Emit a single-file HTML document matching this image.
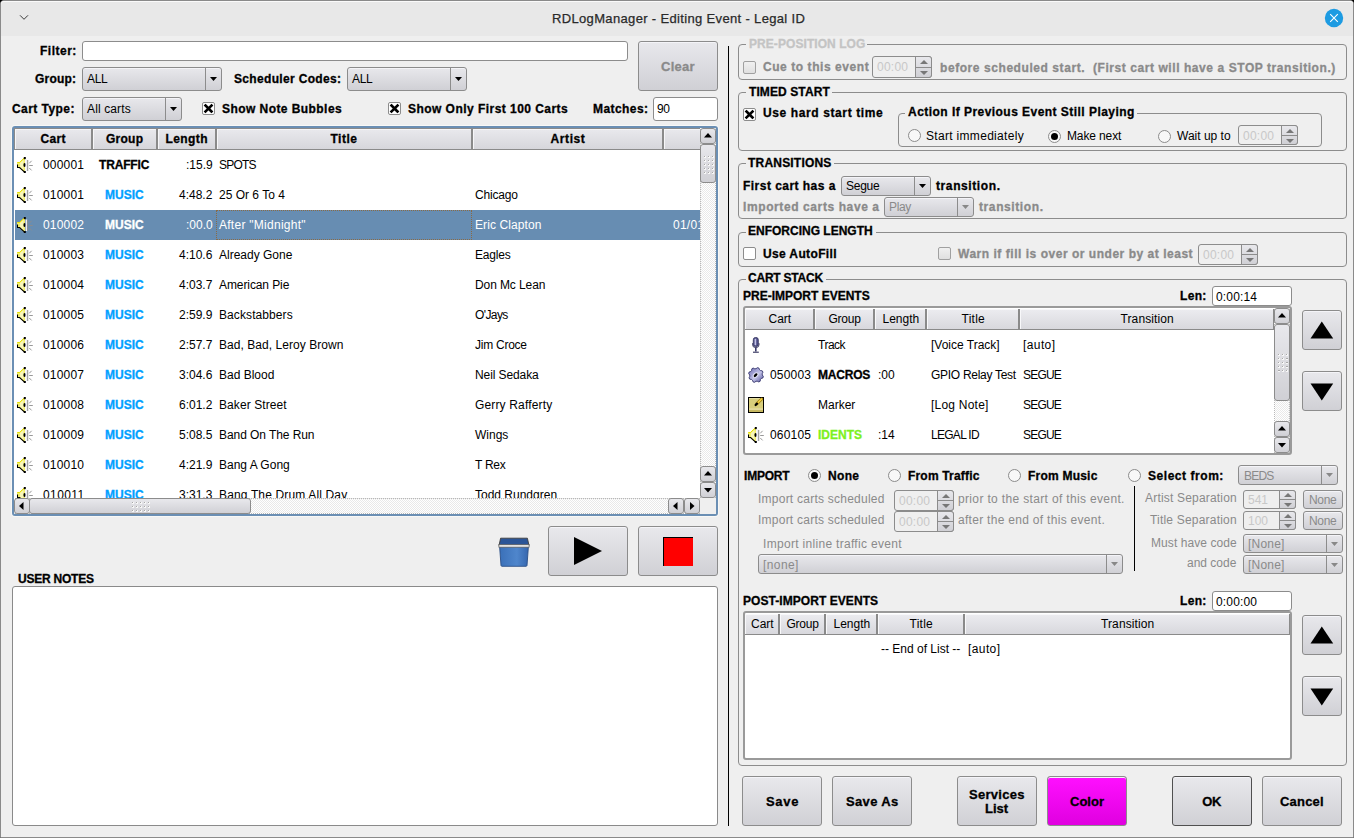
<!DOCTYPE html>
<html><head><meta charset="utf-8"><style>
html,body{margin:0;padding:0;width:1354px;height:838px;overflow:hidden;background:#000}
body div{position:absolute;box-sizing:border-box}
.t{position:absolute;font-family:"Liberation Sans",sans-serif;line-height:20px;white-space:pre}
svg{overflow:visible}
</style></head><body>
<svg width="0" height="0" style="position:absolute"><defs>
<linearGradient id="gg" x1="0" y1="0" x2="1" y2="1"><stop offset="0" stop-color="#6c6cb4"/><stop offset="0.55" stop-color="#c4c4e8"/><stop offset="1" stop-color="#50509a"/></linearGradient>
<linearGradient id="tg" x1="0" y1="0" x2="1" y2="0"><stop offset="0" stop-color="#3a70b8"/><stop offset="0.6" stop-color="#4f86cc"/><stop offset="1" stop-color="#3566ae"/></linearGradient>
<symbol id="spk" viewBox="0 0 16 16">
 <path d="M0 5 H2.5 L8 0 V16 L2.5 11 H0 Z" fill="#f2ee6a"/>
 <path d="M3 6 L6.5 2.8 V13.2 L3 10 Z" fill="#f8f6b8"/>
 <path d="M0.5 7.5 V10.5 H2.6 L7.6 15.2" fill="none" stroke="#000" stroke-width="1.1"/>
 <path d="M0.4 5.5 H2.5 L7.2 1" fill="none" stroke="#e6de00" stroke-width="1"/>
 <rect x="6.8" y="0" width="2" height="2.2" fill="#000"/>
 <rect x="6.8" y="14" width="2" height="2" fill="#000"/>
 <ellipse cx="7.6" cy="8" rx="1.2" ry="1.9" fill="#000"/>
 <rect x="8.6" y="2.5" width="1.6" height="11.5" fill="#ededf3"/>
 <rect x="10.2" y="3" width="1" height="11" fill="#8c8c8c"/>
 <path d="M12.3 6.3 L14.6 3.8 M12.2 8.5 H15.8 M12.3 11 L14.6 13.4" stroke="#8c8c8c" stroke-width="0.9"/>
</symbol>
<symbol id="mic" viewBox="0 0 16 16">
 <rect x="5.3" y="0.4" width="5" height="9.2" rx="2.4" fill="#50508a" stroke="#2c2c58" stroke-width="0.8"/>
 <rect x="6.6" y="1.8" width="1.6" height="6.4" fill="#c4c4e6"/>
 <path d="M4.6 6.2 V7.8 Q4.6 10.6 7.8 10.6 Q11 10.6 11 7.8 V6.2" fill="none" stroke="#2c2c58" stroke-width="0.9"/>
 <path d="M7.8 10.6 V14.6" stroke="#3a3a6a" stroke-width="1.6"/>
 <path d="M5 15.2 H10.8" stroke="#2c2c58" stroke-width="1.1"/>
</symbol>
<symbol id="gear" viewBox="0 0 16 16">
 <path d="M15.35 9.49 L14.92 10.90 L13.23 11.52 L12.44 12.47 L12.14 14.25 L10.84 14.94 L9.21 14.18 L7.98 14.30 L6.51 15.35 L5.10 14.92 L4.48 13.23 L3.53 12.44 L1.75 12.14 L1.06 10.84 L1.82 9.21 L1.70 7.98 L0.65 6.51 L1.08 5.10 L2.77 4.48 L3.56 3.53 L3.86 1.75 L5.16 1.06 L6.79 1.82 L8.02 1.70 L9.49 0.65 L10.90 1.08 L11.52 2.77 L12.47 3.56 L14.25 3.86 L14.94 5.16 L14.18 6.79 L14.30 8.02 Z" fill="url(#gg)" stroke="#34346c" stroke-width="0.9" stroke-linejoin="round"/>
 <ellipse cx="7.6" cy="8.2" rx="3.3" ry="2.3" transform="rotate(-45 7.6 8.2)" fill="#e4e4f6"/>
 <ellipse cx="7.6" cy="8.2" rx="2.3" ry="1.3" transform="rotate(-45 7.6 8.2)" fill="#000"/>
</symbol>
<symbol id="note" viewBox="0 0 16 16">
 <rect x="0.5" y="0.5" width="15" height="15" fill="#d8ce7c" stroke="#000" stroke-width="1"/>
 <rect x="1" y="1" width="14" height="1" fill="#e6dea0"/>
 <rect x="1" y="11.6" width="14" height="1.2" fill="#eee6b8"/>
 <rect x="1" y="12.8" width="14" height="2.2" fill="#c6b862"/>
 <path d="M9 6.6 L13.6 2" stroke="#9a7a10" stroke-width="3" stroke-linecap="round"/>
 <path d="M9 6.6 L13.6 2" stroke="#f4d040" stroke-width="1.7" stroke-linecap="round"/>
 <path d="M7.6 8 L9 6.6" stroke="#000" stroke-width="2.2" stroke-linecap="round"/>
</symbol>
<symbol id="trash" viewBox="0 0 32 30">
 <path d="M1.6 9.5 H30.4 L29 28.5 Q28.8 29.3 28 29.3 H4 Q3.2 29.3 3 28.5 Z" fill="url(#tg)" stroke="#2a4e86" stroke-width="0.9"/>
 <path d="M2.6 1.2 H29.4 L31 8.6 H1 Z" fill="#2b5597" stroke="#3c3c3c" stroke-width="0.9"/>
 <rect x="0.9" y="7.6" width="30.2" height="2.6" fill="#e2e2e2" stroke="#5a5a5a" stroke-width="0.7"/>
</symbol>
</defs></svg>
<div style="left:0px;top:0px;width:1354px;height:838px;background:#000;"></div><div style="left:0px;top:0px;width:1354px;height:838px;background:#efefef;border:1px solid #8a8a8a;border-radius:4px 4px 0 0;"></div><div style="left:1px;top:1px;width:1352px;height:35px;background:#e8e8e8;border-radius:3px 3px 0 0;box-shadow:inset 0 1px 0 #fafafa;"></div><svg style="position:absolute;left:18px;top:13px" width="14" height="10"><path d="M2 2.3 L6 6.3 L10 2.3" fill="none" stroke="#3a3a3a" stroke-width="1"/></svg><span class="t" style="left:552.00px;top:9px;font-size:13px;color:#2a2a2a;letter-spacing:0.342px;-webkit-text-stroke:0.25px;">RDLogManager - Editing Event - Legal ID</span><svg style="position:absolute;left:1324px;top:8px" width="20" height="20"><circle cx="10" cy="10" r="9.2" fill="#1d9be2"/><path d="M6.2 6.2 L13.8 13.8 M13.8 6.2 L6.2 13.8" stroke="#fff" stroke-width="1.1"/></svg><span class="t" style="left:40.00px;top:41px;font-size:12px;color:#000;font-weight:bold;-webkit-text-stroke:0.3px;letter-spacing:0.500px;">Filter:</span><div style="left:82px;top:41px;width:546px;height:20px;background:#fff;border:1px solid #8c8c8c;border-radius:3px;"></div><span class="t" style="left:35.00px;top:69px;font-size:12px;color:#000;font-weight:bold;-webkit-text-stroke:0.3px;letter-spacing:0.200px;">Group:</span><div style="left:82px;top:67px;width:140px;height:24px;background:linear-gradient(#e8e8ec,#d0d0d5);border:1px solid #8c8c8c;border-radius:3px;box-shadow:inset 0 1px 0 #f4f4f8;"></div><div style="left:205px;top:67px;width:1px;height:24px;background:#8c8c8c;"></div><svg style="position:absolute;left:210.00px;top:77.00px" width="7.00" height="4.00"><path d="M0.00 0.00 L7.00 0.00 L3.50 4.00 Z" fill="#000"/></svg><span class="t" style="left:87.00px;top:69px;font-size:12px;color:#000;letter-spacing:-0.300px;">ALL</span><span class="t" style="left:234.00px;top:69px;font-size:12px;color:#000;font-weight:bold;-webkit-text-stroke:0.3px;letter-spacing:0.333px;">Scheduler Codes:</span><div style="left:347px;top:67px;width:120px;height:24px;background:linear-gradient(#e8e8ec,#d0d0d5);border:1px solid #8c8c8c;border-radius:3px;box-shadow:inset 0 1px 0 #f4f4f8;"></div><div style="left:450px;top:67px;width:1px;height:24px;background:#8c8c8c;"></div><svg style="position:absolute;left:455.00px;top:77.00px" width="7.00" height="4.00"><path d="M0.00 0.00 L7.00 0.00 L3.50 4.00 Z" fill="#000"/></svg><span class="t" style="left:352.00px;top:69px;font-size:12px;color:#000;letter-spacing:-0.300px;">ALL</span><div style="left:638px;top:41px;width:80px;height:50px;background:linear-gradient(#e8e8ec,#d0d0d5);border:1px solid #8c8c8c;border-radius:3px;box-shadow:inset 0 1px 0 #f4f4f8;"></div><span class="t" style="left:661.00px;top:57px;font-size:13px;color:#8a8a8a;font-weight:bold;-webkit-text-stroke:0.3px;letter-spacing:0.250px;">Clear</span><span class="t" style="left:12.00px;top:99px;font-size:12px;color:#000;font-weight:bold;-webkit-text-stroke:0.3px;letter-spacing:0.444px;">Cart Type:</span><div style="left:82px;top:97px;width:100px;height:24px;background:linear-gradient(#e8e8ec,#d0d0d5);border:1px solid #8c8c8c;border-radius:3px;box-shadow:inset 0 1px 0 #f4f4f8;"></div><div style="left:165px;top:97px;width:1px;height:24px;background:#8c8c8c;"></div><svg style="position:absolute;left:170.00px;top:107.00px" width="7.00" height="4.00"><path d="M0.00 0.00 L7.00 0.00 L3.50 4.00 Z" fill="#000"/></svg><span class="t" style="left:87.00px;top:99px;font-size:12px;color:#000;letter-spacing:0.125px;">All carts</span><div style="left:202px;top:102px;width:13px;height:13px;background:#fff;border:1px solid #8c8c8c;border-radius:2px;"></div><svg style="position:absolute;left:202px;top:102px" width="13" height="13"><path d="M3.5 3.5 L9.5 9.5 M9.5 3.5 L3.5 9.5" stroke="#000" stroke-width="2.6" stroke-linecap="square"/></svg><span class="t" style="left:222.00px;top:99px;font-size:12px;color:#000;font-weight:bold;-webkit-text-stroke:0.3px;letter-spacing:0.438px;">Show Note Bubbles</span><div style="left:388px;top:102px;width:13px;height:13px;background:#fff;border:1px solid #8c8c8c;border-radius:2px;"></div><svg style="position:absolute;left:388px;top:102px" width="13" height="13"><path d="M3.5 3.5 L9.5 9.5 M9.5 3.5 L3.5 9.5" stroke="#000" stroke-width="2.6" stroke-linecap="square"/></svg><span class="t" style="left:408.00px;top:99px;font-size:12px;color:#000;font-weight:bold;-webkit-text-stroke:0.3px;letter-spacing:0.458px;">Show Only First 100 Carts</span><span class="t" style="left:593.00px;top:99px;font-size:12px;color:#000;font-weight:bold;-webkit-text-stroke:0.3px;letter-spacing:0.429px;">Matches:</span><div style="left:653px;top:97px;width:65px;height:24px;background:#fff;border:1px solid #8c8c8c;border-radius:3px;"></div><span class="t" style="left:657.00px;top:99px;font-size:12px;color:#000;letter-spacing:-0.300px;">90</span><div style="left:12px;top:126px;width:706px;height:390px;background:#fff;border:2px solid #6b8fb4;border-radius:3px;box-shadow:0 0 0 1px #f8f8f6;"></div><div style="left:14px;top:128px;width:686px;height:1px;background:#8a8a8a;"></div><div style="left:14px;top:128px;width:1px;height:22px;background:#8a8a8a;"></div><div style="left:15px;top:129px;width:78px;height:21px;background:linear-gradient(#e9e9ed,#d6d6db);border-right:2px solid #8a8a8a;border-bottom:1px solid #8a8a8a;box-shadow:inset 1px 1px 0 #f6f6f8;"></div><span class="t" style="left:40.50px;top:129px;font-size:12px;color:#000;font-weight:bold;-webkit-text-stroke:0.3px;letter-spacing:0.333px;">Cart</span><div style="left:93px;top:129px;width:65px;height:21px;background:linear-gradient(#e9e9ed,#d6d6db);border-right:2px solid #8a8a8a;border-bottom:1px solid #8a8a8a;box-shadow:inset 1px 1px 0 #f6f6f8;"></div><span class="t" style="left:106.00px;top:129px;font-size:12px;color:#000;font-weight:bold;-webkit-text-stroke:0.3px;letter-spacing:0.250px;">Group</span><div style="left:158px;top:129px;width:59px;height:21px;background:linear-gradient(#e9e9ed,#d6d6db);border-right:2px solid #8a8a8a;border-bottom:1px solid #8a8a8a;box-shadow:inset 1px 1px 0 #f6f6f8;"></div><span class="t" style="left:165.50px;top:129px;font-size:12px;color:#000;font-weight:bold;-webkit-text-stroke:0.3px;letter-spacing:0.400px;">Length</span><div style="left:217px;top:129px;width:256px;height:21px;background:linear-gradient(#e9e9ed,#d6d6db);border-right:2px solid #8a8a8a;border-bottom:1px solid #8a8a8a;box-shadow:inset 1px 1px 0 #f6f6f8;"></div><span class="t" style="left:330.50px;top:129px;font-size:12px;color:#000;font-weight:bold;-webkit-text-stroke:0.3px;letter-spacing:0.500px;">Title</span><div style="left:473px;top:129px;width:191px;height:21px;background:linear-gradient(#e9e9ed,#d6d6db);border-right:2px solid #8a8a8a;border-bottom:1px solid #8a8a8a;box-shadow:inset 1px 1px 0 #f6f6f8;"></div><span class="t" style="left:550.50px;top:129px;font-size:12px;color:#000;font-weight:bold;-webkit-text-stroke:0.3px;letter-spacing:0.600px;">Artist</span><div style="left:664px;top:129px;width:36px;height:21px;background:linear-gradient(#e9e9ed,#d6d6db);border-right:0 solid #8a8a8a;border-bottom:1px solid #8a8a8a;box-shadow:inset 1px 1px 0 #f6f6f8;"></div><div style="left:15px;top:150px;width:685px;height:348px;overflow:hidden"><svg style="position:absolute;left:2px;top:7px" width="16" height="16"><use href="#spk"/></svg><span class="t" style="left:28.00px;top:5px;font-size:12px;color:#000;letter-spacing:0.200px;">000001</span><span class="t" style="left:84.00px;top:5px;font-size:12px;color:#000;font-weight:bold;-webkit-text-stroke:0.3px;letter-spacing:-0.167px;">TRAFFIC</span><span class="t" style="left:171.00px;top:5px;font-size:12px;color:#000;">:15.9</span><span class="t" style="left:204.00px;top:5px;font-size:12px;color:#000;letter-spacing:-0.800px;">SPOTS</span><svg style="position:absolute;left:2px;top:37px" width="16" height="16"><use href="#spk"/></svg><span class="t" style="left:28.00px;top:35px;font-size:12px;color:#000;letter-spacing:0.200px;">010001</span><span class="t" style="left:90.00px;top:35px;font-size:12px;color:#00a0ff;font-weight:bold;-webkit-text-stroke:0.3px;">MUSIC</span><span class="t" style="left:164.00px;top:35px;font-size:12px;color:#000;">4:48.2</span><span class="t" style="left:204.00px;top:35px;font-size:12px;color:#000;">25 Or 6 To 4</span><span class="t" style="left:460.00px;top:35px;font-size:12px;color:#000;letter-spacing:-0.167px;">Chicago</span><div style="left:0;top:60px;width:685px;height:30px;background:#678db2"></div><svg style="position:absolute;left:2px;top:67px" width="16" height="16"><use href="#spk"/></svg><span class="t" style="left:28.00px;top:65px;font-size:12px;color:#fff;letter-spacing:0.200px;">010002</span><span class="t" style="left:90.00px;top:65px;font-size:12px;color:#fff;font-weight:bold;-webkit-text-stroke:0.3px;">MUSIC</span><span class="t" style="left:171.00px;top:65px;font-size:12px;color:#fff;">:00.0</span><span class="t" style="left:204.00px;top:65px;font-size:12px;color:#fff;letter-spacing:0.267px;">After &quot;Midnight&quot;</span><span class="t" style="left:460.00px;top:65px;font-size:12px;color:#fff;letter-spacing:0.091px;">Eric Clapton</span><span class="t" style="left:658.00px;top:65px;font-size:12px;color:#fff;letter-spacing:0.250px;">01/01</span><div style="left:201px;top:60px;width:256px;height:30px;border:1px dotted #8a6a44"></div><svg style="position:absolute;left:2px;top:97px" width="16" height="16"><use href="#spk"/></svg><span class="t" style="left:28.00px;top:95px;font-size:12px;color:#000;letter-spacing:0.200px;">010003</span><span class="t" style="left:90.00px;top:95px;font-size:12px;color:#00a0ff;font-weight:bold;-webkit-text-stroke:0.3px;">MUSIC</span><span class="t" style="left:164.00px;top:95px;font-size:12px;color:#000;">4:10.6</span><span class="t" style="left:204.00px;top:95px;font-size:12px;color:#000;">Already Gone</span><span class="t" style="left:460.00px;top:95px;font-size:12px;color:#000;letter-spacing:-0.200px;">Eagles</span><svg style="position:absolute;left:2px;top:127px" width="16" height="16"><use href="#spk"/></svg><span class="t" style="left:28.00px;top:125px;font-size:12px;color:#000;letter-spacing:0.200px;">010004</span><span class="t" style="left:90.00px;top:125px;font-size:12px;color:#00a0ff;font-weight:bold;-webkit-text-stroke:0.3px;">MUSIC</span><span class="t" style="left:164.00px;top:125px;font-size:12px;color:#000;">4:03.7</span><span class="t" style="left:204.00px;top:125px;font-size:12px;color:#000;letter-spacing:-0.091px;">American Pie</span><span class="t" style="left:460.00px;top:125px;font-size:12px;color:#000;letter-spacing:-0.100px;">Don Mc Lean</span><svg style="position:absolute;left:2px;top:157px" width="16" height="16"><use href="#spk"/></svg><span class="t" style="left:28.00px;top:155px;font-size:12px;color:#000;letter-spacing:0.200px;">010005</span><span class="t" style="left:90.00px;top:155px;font-size:12px;color:#00a0ff;font-weight:bold;-webkit-text-stroke:0.3px;">MUSIC</span><span class="t" style="left:164.00px;top:155px;font-size:12px;color:#000;">2:59.9</span><span class="t" style="left:204.00px;top:155px;font-size:12px;color:#000;letter-spacing:0.091px;">Backstabbers</span><span class="t" style="left:460.00px;top:155px;font-size:12px;color:#000;letter-spacing:-0.600px;">O&#x27;Jays</span><svg style="position:absolute;left:2px;top:187px" width="16" height="16"><use href="#spk"/></svg><span class="t" style="left:28.00px;top:185px;font-size:12px;color:#000;letter-spacing:0.200px;">010006</span><span class="t" style="left:90.00px;top:185px;font-size:12px;color:#00a0ff;font-weight:bold;-webkit-text-stroke:0.3px;">MUSIC</span><span class="t" style="left:164.00px;top:185px;font-size:12px;color:#000;">2:57.7</span><span class="t" style="left:204.00px;top:185px;font-size:12px;color:#000;letter-spacing:0.050px;">Bad, Bad, Leroy Brown</span><span class="t" style="left:460.00px;top:185px;font-size:12px;color:#000;letter-spacing:-0.250px;">Jim Croce</span><svg style="position:absolute;left:2px;top:217px" width="16" height="16"><use href="#spk"/></svg><span class="t" style="left:28.00px;top:215px;font-size:12px;color:#000;letter-spacing:0.200px;">010007</span><span class="t" style="left:90.00px;top:215px;font-size:12px;color:#00a0ff;font-weight:bold;-webkit-text-stroke:0.3px;">MUSIC</span><span class="t" style="left:164.00px;top:215px;font-size:12px;color:#000;">3:04.6</span><span class="t" style="left:204.00px;top:215px;font-size:12px;color:#000;">Bad Blood</span><span class="t" style="left:460.00px;top:215px;font-size:12px;color:#000;letter-spacing:-0.100px;">Neil Sedaka</span><svg style="position:absolute;left:2px;top:247px" width="16" height="16"><use href="#spk"/></svg><span class="t" style="left:28.00px;top:245px;font-size:12px;color:#000;letter-spacing:0.200px;">010008</span><span class="t" style="left:90.00px;top:245px;font-size:12px;color:#00a0ff;font-weight:bold;-webkit-text-stroke:0.3px;">MUSIC</span><span class="t" style="left:164.00px;top:245px;font-size:12px;color:#000;">6:01.2</span><span class="t" style="left:204.00px;top:245px;font-size:12px;color:#000;letter-spacing:0.091px;">Baker Street</span><span class="t" style="left:460.00px;top:245px;font-size:12px;color:#000;letter-spacing:0.154px;">Gerry Rafferty</span><svg style="position:absolute;left:2px;top:277px" width="16" height="16"><use href="#spk"/></svg><span class="t" style="left:28.00px;top:275px;font-size:12px;color:#000;letter-spacing:0.200px;">010009</span><span class="t" style="left:90.00px;top:275px;font-size:12px;color:#00a0ff;font-weight:bold;-webkit-text-stroke:0.3px;">MUSIC</span><span class="t" style="left:164.00px;top:275px;font-size:12px;color:#000;">5:08.5</span><span class="t" style="left:204.00px;top:275px;font-size:12px;color:#000;letter-spacing:-0.071px;">Band On The Run</span><span class="t" style="left:460.00px;top:275px;font-size:12px;color:#000;">Wings</span><svg style="position:absolute;left:2px;top:307px" width="16" height="16"><use href="#spk"/></svg><span class="t" style="left:28.00px;top:305px;font-size:12px;color:#000;letter-spacing:0.200px;">010010</span><span class="t" style="left:90.00px;top:305px;font-size:12px;color:#00a0ff;font-weight:bold;-webkit-text-stroke:0.3px;">MUSIC</span><span class="t" style="left:164.00px;top:305px;font-size:12px;color:#000;">4:21.9</span><span class="t" style="left:204.00px;top:305px;font-size:12px;color:#000;">Bang A Gong</span><span class="t" style="left:460.00px;top:305px;font-size:12px;color:#000;letter-spacing:-0.250px;">T Rex</span><svg style="position:absolute;left:2px;top:337px" width="16" height="16"><use href="#spk"/></svg><span class="t" style="left:28.00px;top:335px;font-size:12px;color:#000;letter-spacing:0.400px;">010011</span><span class="t" style="left:90.00px;top:335px;font-size:12px;color:#00a0ff;font-weight:bold;-webkit-text-stroke:0.3px;">MUSIC</span><span class="t" style="left:164.00px;top:335px;font-size:12px;color:#000;">3:31.3</span><span class="t" style="left:204.00px;top:335px;font-size:12px;color:#000;letter-spacing:0.150px;">Bang The Drum All Day</span><span class="t" style="left:460.00px;top:335px;font-size:12px;color:#000;">Todd Rundgren</span></div><div style="left:700px;top:129px;width:16px;height:369px;background:repeating-conic-gradient(#fff 0 25%,#e9e9e9 0 50%) 0 0/2px 2px;border-left:1px dotted #b8b8b8;border-right:1px dotted #b8b8b8;"></div><div style="left:700px;top:128px;width:16px;height:16px;background:linear-gradient(#e8e8ec,#d0d0d5);border:1px solid #8c8c8c;border-radius:3px;"></div><svg style="position:absolute;left:703.50px;top:132.75px" width="8.00" height="4.50"><path d="M0.00 4.50 L8.00 4.50 L4.00 0.00 Z" fill="#000"/></svg><div style="left:700px;top:144px;width:16px;height:39px;background:linear-gradient(#e8e8ec,#d0d0d5);border:1px solid #8c8c8c;border-radius:3px;"></div><div style="left:704px;top:156px;width:2px;height:2px;background:linear-gradient(135deg,#a8a8a8 50%,#f8f8f8 50%);"></div><div style="left:704px;top:160px;width:2px;height:2px;background:linear-gradient(135deg,#a8a8a8 50%,#f8f8f8 50%);"></div><div style="left:704px;top:164px;width:2px;height:2px;background:linear-gradient(135deg,#a8a8a8 50%,#f8f8f8 50%);"></div><div style="left:704px;top:168px;width:2px;height:2px;background:linear-gradient(135deg,#a8a8a8 50%,#f8f8f8 50%);"></div><div style="left:704px;top:172px;width:2px;height:2px;background:linear-gradient(135deg,#a8a8a8 50%,#f8f8f8 50%);"></div><div style="left:708px;top:156px;width:2px;height:2px;background:linear-gradient(135deg,#a8a8a8 50%,#f8f8f8 50%);"></div><div style="left:708px;top:160px;width:2px;height:2px;background:linear-gradient(135deg,#a8a8a8 50%,#f8f8f8 50%);"></div><div style="left:708px;top:164px;width:2px;height:2px;background:linear-gradient(135deg,#a8a8a8 50%,#f8f8f8 50%);"></div><div style="left:708px;top:168px;width:2px;height:2px;background:linear-gradient(135deg,#a8a8a8 50%,#f8f8f8 50%);"></div><div style="left:708px;top:172px;width:2px;height:2px;background:linear-gradient(135deg,#a8a8a8 50%,#f8f8f8 50%);"></div><div style="left:712px;top:156px;width:2px;height:2px;background:linear-gradient(135deg,#a8a8a8 50%,#f8f8f8 50%);"></div><div style="left:712px;top:160px;width:2px;height:2px;background:linear-gradient(135deg,#a8a8a8 50%,#f8f8f8 50%);"></div><div style="left:712px;top:164px;width:2px;height:2px;background:linear-gradient(135deg,#a8a8a8 50%,#f8f8f8 50%);"></div><div style="left:712px;top:168px;width:2px;height:2px;background:linear-gradient(135deg,#a8a8a8 50%,#f8f8f8 50%);"></div><div style="left:712px;top:172px;width:2px;height:2px;background:linear-gradient(135deg,#a8a8a8 50%,#f8f8f8 50%);"></div><div style="left:700px;top:466px;width:16px;height:16px;background:linear-gradient(#e8e8ec,#d0d0d5);border:1px solid #8c8c8c;border-radius:3px;"></div><svg style="position:absolute;left:703.50px;top:470.75px" width="8.00" height="4.50"><path d="M0.00 4.50 L8.00 4.50 L4.00 0.00 Z" fill="#000"/></svg><div style="left:700px;top:482px;width:16px;height:16px;background:linear-gradient(#e8e8ec,#d0d0d5);border:1px solid #8c8c8c;border-radius:3px;"></div><svg style="position:absolute;left:703.50px;top:487.75px" width="8.00" height="4.50"><path d="M0.00 0.00 L8.00 0.00 L4.00 4.50 Z" fill="#000"/></svg><div style="left:15px;top:498px;width:685px;height:16px;background:repeating-conic-gradient(#fff 0 25%,#e9e9e9 0 50%) 0 0/2px 2px;border-top:1px dotted #b8b8b8;border-bottom:1px dotted #b8b8b8;"></div><div style="left:14px;top:498px;width:16px;height:16px;background:linear-gradient(#e8e8ec,#d0d0d5);border:1px solid #8c8c8c;border-radius:3px;"></div><svg style="position:absolute;left:18.75px;top:501.50px" width="4.50" height="8.00"><path d="M4.50 0.00 L4.50 8.00 L0.00 4.00 Z" fill="#000"/></svg><div style="left:29px;top:498px;width:222px;height:16px;background:linear-gradient(#e8e8ec,#d0d0d5);border:1px solid #8c8c8c;border-radius:3px;"></div><div style="left:132px;top:502px;width:2px;height:2px;background:linear-gradient(135deg,#a8a8a8 50%,#f8f8f8 50%);"></div><div style="left:132px;top:506px;width:2px;height:2px;background:linear-gradient(135deg,#a8a8a8 50%,#f8f8f8 50%);"></div><div style="left:132px;top:510px;width:2px;height:2px;background:linear-gradient(135deg,#a8a8a8 50%,#f8f8f8 50%);"></div><div style="left:136px;top:502px;width:2px;height:2px;background:linear-gradient(135deg,#a8a8a8 50%,#f8f8f8 50%);"></div><div style="left:136px;top:506px;width:2px;height:2px;background:linear-gradient(135deg,#a8a8a8 50%,#f8f8f8 50%);"></div><div style="left:136px;top:510px;width:2px;height:2px;background:linear-gradient(135deg,#a8a8a8 50%,#f8f8f8 50%);"></div><div style="left:140px;top:502px;width:2px;height:2px;background:linear-gradient(135deg,#a8a8a8 50%,#f8f8f8 50%);"></div><div style="left:140px;top:506px;width:2px;height:2px;background:linear-gradient(135deg,#a8a8a8 50%,#f8f8f8 50%);"></div><div style="left:140px;top:510px;width:2px;height:2px;background:linear-gradient(135deg,#a8a8a8 50%,#f8f8f8 50%);"></div><div style="left:144px;top:502px;width:2px;height:2px;background:linear-gradient(135deg,#a8a8a8 50%,#f8f8f8 50%);"></div><div style="left:144px;top:506px;width:2px;height:2px;background:linear-gradient(135deg,#a8a8a8 50%,#f8f8f8 50%);"></div><div style="left:144px;top:510px;width:2px;height:2px;background:linear-gradient(135deg,#a8a8a8 50%,#f8f8f8 50%);"></div><div style="left:148px;top:502px;width:2px;height:2px;background:linear-gradient(135deg,#a8a8a8 50%,#f8f8f8 50%);"></div><div style="left:148px;top:506px;width:2px;height:2px;background:linear-gradient(135deg,#a8a8a8 50%,#f8f8f8 50%);"></div><div style="left:148px;top:510px;width:2px;height:2px;background:linear-gradient(135deg,#a8a8a8 50%,#f8f8f8 50%);"></div><div style="left:668px;top:498px;width:16px;height:16px;background:linear-gradient(#e8e8ec,#d0d0d5);border:1px solid #8c8c8c;border-radius:3px;"></div><svg style="position:absolute;left:672.75px;top:501.50px" width="4.50" height="8.00"><path d="M4.50 0.00 L4.50 8.00 L0.00 4.00 Z" fill="#000"/></svg><div style="left:684px;top:498px;width:16px;height:16px;background:linear-gradient(#e8e8ec,#d0d0d5);border:1px solid #8c8c8c;border-radius:3px;"></div><svg style="position:absolute;left:689.75px;top:501.50px" width="4.50" height="8.00"><path d="M0.00 0.00 L0.00 8.00 L4.50 4.00 Z" fill="#000"/></svg><div style="left:700px;top:498px;width:16px;height:16px;background:#efefef;"></div><svg style="position:absolute;left:498px;top:537px" width="32" height="30"><use href="#trash"/></svg><div style="left:548px;top:526px;width:80px;height:50px;background:linear-gradient(#e8e8ec,#d0d0d5);border:1px solid #8c8c8c;border-radius:3px;box-shadow:inset 0 1px 0 #f4f4f8;"></div><svg style="position:absolute;left:573px;top:536px" width="31" height="31"><path d="M1 1 L29 15 L1 29 Z" fill="#000"/></svg><div style="left:638px;top:526px;width:80px;height:50px;background:linear-gradient(#e8e8ec,#d0d0d5);border:1px solid #8c8c8c;border-radius:3px;box-shadow:inset 0 1px 0 #f4f4f8;"></div><div style="left:663px;top:537px;width:30px;height:29px;background:#f00;border-top:1px solid #000;border-left:1px solid #000;"></div><span class="t" style="left:18.00px;top:569px;font-size:12px;color:#000;font-weight:bold;-webkit-text-stroke:0.3px;letter-spacing:-0.222px;">USER NOTES</span><div style="left:12px;top:586px;width:706px;height:240px;background:#fff;border:1px solid #8a8a8a;border-radius:3px;"></div><div style="left:728px;top:46px;width:1px;height:780px;background:#000;"></div><div style="left:738px;top:44px;width:609px;height:36px;border:1px solid #8c8c8c;border-radius:4px;"></div><div style="left:746px;top:43px;width:121px;height:3px;background:#efefef;"></div><span class="t" style="left:749.00px;top:34px;font-size:12px;color:#c4c4c4;font-weight:bold;-webkit-text-stroke:0.3px;letter-spacing:0.067px;">PRE-POSITION LOG</span><div style="left:743px;top:61px;width:13px;height:13px;background:linear-gradient(#f0f0f0,#e0e0e0);border:1px solid #a0a0a0;border-radius:2px;"></div><span class="t" style="left:763.00px;top:57px;font-size:12px;color:#8a8a8a;font-weight:bold;-webkit-text-stroke:0.3px;letter-spacing:0.562px;">Cue to this event</span><div style="left:872px;top:56px;width:60px;height:22px;background:#efefef;border:1px solid #8c8c8c;border-radius:3px;"></div><div style="left:915px;top:56px;width:17px;height:22px;background:linear-gradient(#e8e8ec,#d0d0d5);border:1px solid #8c8c8c;border-radius:0 3px 3px 0;"></div><div style="left:915px;top:67px;width:17px;height:1px;background:#8c8c8c;"></div><svg style="position:absolute;left:919.50px;top:60.00px" width="8.00" height="4.00"><path d="M0.00 4.00 L8.00 4.00 L4.00 0.00 Z" fill="#777"/></svg><svg style="position:absolute;left:919.50px;top:71.00px" width="8.00" height="4.00"><path d="M0.00 0.00 L8.00 0.00 L4.00 4.00 Z" fill="#777"/></svg><span class="t" style="left:877.00px;top:57px;font-size:12px;color:#c8c8c8;letter-spacing:0.250px;">00:00</span><span class="t" style="left:940.00px;top:58px;font-size:12px;color:#8a8a8a;font-weight:bold;-webkit-text-stroke:0.3px;letter-spacing:0.569px;">before scheduled start.  (First cart will have a STOP transition.)</span><div style="left:738px;top:92px;width:609px;height:59px;border:1px solid #8c8c8c;border-radius:4px;"></div><div style="left:746px;top:91px;width:86px;height:3px;background:#efefef;"></div><span class="t" style="left:749.00px;top:82px;font-size:12px;color:#000;font-weight:bold;-webkit-text-stroke:0.3px;letter-spacing:0.100px;">TIMED START</span><div style="left:743px;top:108px;width:13px;height:13px;background:#fff;border:1px solid #8c8c8c;border-radius:2px;"></div><svg style="position:absolute;left:743px;top:108px" width="13" height="13"><path d="M3.5 3.5 L9.5 9.5 M9.5 3.5 L3.5 9.5" stroke="#000" stroke-width="2.6" stroke-linecap="square"/></svg><span class="t" style="left:763.00px;top:103px;font-size:12px;color:#000;font-weight:bold;-webkit-text-stroke:0.3px;letter-spacing:0.611px;">Use hard start time</span><div style="left:898px;top:113px;width:424px;height:34px;border:1px solid #8c8c8c;border-radius:4px;"></div><div style="left:905px;top:112px;width:232px;height:3px;background:#efefef;"></div><span class="t" style="left:908.00px;top:102px;font-size:12px;color:#000;font-weight:bold;-webkit-text-stroke:0.3px;letter-spacing:0.459px;">Action If Previous Event Still Playing</span><div style="left:908px;top:129px;width:13px;height:13px;background:#f8f8f8;border:1px solid #8c8c8c;border-radius:50%;"></div><span class="t" style="left:926.00px;top:126px;font-size:12px;color:#000;letter-spacing:0.312px;">Start immediately</span><div style="left:1048px;top:130px;width:13px;height:13px;background:#f8f8f8;border:1px solid #8c8c8c;border-radius:50%;"></div><div style="left:1051px;top:133px;width:7px;height:7px;background:#000;border-radius:50%;"></div><span class="t" style="left:1067.00px;top:126px;font-size:12px;color:#000;letter-spacing:-0.125px;">Make next</span><div style="left:1158px;top:130px;width:13px;height:13px;background:#f8f8f8;border:1px solid #8c8c8c;border-radius:50%;"></div><span class="t" style="left:1177.00px;top:126px;font-size:12px;color:#000;">Wait up to</span><div style="left:1238px;top:125px;width:60px;height:20px;background:#efefef;border:1px solid #8c8c8c;border-radius:3px;"></div><div style="left:1281px;top:125px;width:17px;height:20px;background:linear-gradient(#e8e8ec,#d0d0d5);border:1px solid #8c8c8c;border-radius:0 3px 3px 0;"></div><div style="left:1281px;top:135px;width:17px;height:1px;background:#8c8c8c;"></div><svg style="position:absolute;left:1285.50px;top:128.50px" width="8.00" height="4.00"><path d="M0.00 4.00 L8.00 4.00 L4.00 0.00 Z" fill="#777"/></svg><svg style="position:absolute;left:1285.50px;top:138.50px" width="8.00" height="4.00"><path d="M0.00 0.00 L8.00 0.00 L4.00 4.00 Z" fill="#777"/></svg><span class="t" style="left:1243.00px;top:126px;font-size:12px;color:#c8c8c8;letter-spacing:0.250px;">00:00</span><div style="left:738px;top:163px;width:609px;height:56px;border:1px solid #8c8c8c;border-radius:4px;"></div><div style="left:746px;top:162px;width:88px;height:3px;background:#efefef;"></div><span class="t" style="left:748.00px;top:153px;font-size:12px;color:#000;font-weight:bold;-webkit-text-stroke:0.3px;letter-spacing:0.200px;">TRANSITIONS</span><span class="t" style="left:743.00px;top:176px;font-size:12px;color:#000;font-weight:bold;-webkit-text-stroke:0.3px;letter-spacing:0.467px;">First cart has a</span><div style="left:841px;top:176px;width:90px;height:20px;background:linear-gradient(#e8e8ec,#d0d0d5);border:1px solid #8c8c8c;border-radius:3px;box-shadow:inset 0 1px 0 #f4f4f8;"></div><div style="left:914px;top:176px;width:1px;height:20px;background:#8c8c8c;"></div><svg style="position:absolute;left:919.00px;top:184.00px" width="7.00" height="4.00"><path d="M0.00 0.00 L7.00 0.00 L3.50 4.00 Z" fill="#000"/></svg><span class="t" style="left:846.00px;top:176px;font-size:12px;color:#000;letter-spacing:-0.250px;">Segue</span><span class="t" style="left:936.00px;top:176px;font-size:12px;color:#000;font-weight:bold;-webkit-text-stroke:0.3px;letter-spacing:0.600px;">transition.</span><span class="t" style="left:743.00px;top:197px;font-size:12px;color:#8a8a8a;font-weight:bold;-webkit-text-stroke:0.3px;letter-spacing:0.600px;">Imported carts have a</span><div style="left:884px;top:197px;width:90px;height:20px;background:linear-gradient(#e8e8ec,#d0d0d5);border:1px solid #8c8c8c;border-radius:3px;box-shadow:inset 0 1px 0 #f4f4f8;"></div><div style="left:957px;top:197px;width:1px;height:20px;background:#8c8c8c;"></div><svg style="position:absolute;left:962.00px;top:205.00px" width="7.00" height="4.00"><path d="M0.00 0.00 L7.00 0.00 L3.50 4.00 Z" fill="#888"/></svg><span class="t" style="left:889.00px;top:197px;font-size:12px;color:#8a8a8a;letter-spacing:-0.333px;">Play</span><span class="t" style="left:979.00px;top:197px;font-size:12px;color:#8a8a8a;font-weight:bold;-webkit-text-stroke:0.3px;letter-spacing:0.600px;">transition.</span><div style="left:738px;top:232px;width:609px;height:35px;border:1px solid #8c8c8c;border-radius:4px;"></div><div style="left:746px;top:231px;width:130px;height:3px;background:#efefef;"></div><span class="t" style="left:748.00px;top:221px;font-size:12px;color:#000;font-weight:bold;-webkit-text-stroke:0.3px;">ENFORCING LENGTH</span><div style="left:743px;top:247px;width:13px;height:13px;background:#fff;border:1px solid #8c8c8c;border-radius:2px;"></div><span class="t" style="left:763.00px;top:244px;font-size:12px;color:#000;font-weight:bold;-webkit-text-stroke:0.3px;letter-spacing:0.364px;">Use AutoFill</span><div style="left:938px;top:247px;width:13px;height:13px;background:linear-gradient(#f0f0f0,#e0e0e0);border:1px solid #a0a0a0;border-radius:2px;"></div><span class="t" style="left:958.00px;top:244px;font-size:12px;color:#8a8a8a;font-weight:bold;-webkit-text-stroke:0.3px;letter-spacing:0.525px;">Warn if fill is over or under by at least</span><div style="left:1198px;top:244px;width:60px;height:21px;background:#efefef;border:1px solid #8c8c8c;border-radius:3px;"></div><div style="left:1241px;top:244px;width:17px;height:21px;background:linear-gradient(#e8e8ec,#d0d0d5);border:1px solid #8c8c8c;border-radius:0 3px 3px 0;"></div><div style="left:1241px;top:254px;width:17px;height:1px;background:#8c8c8c;"></div><svg style="position:absolute;left:1245.50px;top:247.50px" width="8.00" height="4.00"><path d="M0.00 4.00 L8.00 4.00 L4.00 0.00 Z" fill="#777"/></svg><svg style="position:absolute;left:1245.50px;top:258.00px" width="8.00" height="4.00"><path d="M0.00 0.00 L8.00 0.00 L4.00 4.00 Z" fill="#777"/></svg><span class="t" style="left:1203.00px;top:245px;font-size:12px;color:#c8c8c8;letter-spacing:0.250px;">00:00</span><div style="left:738px;top:279px;width:609px;height:487px;border:1px solid #8c8c8c;border-radius:4px;"></div><div style="left:746px;top:278px;width:80px;height:3px;background:#efefef;"></div><span class="t" style="left:748.00px;top:268px;font-size:12px;color:#000;font-weight:bold;-webkit-text-stroke:0.3px;letter-spacing:-0.222px;">CART STACK</span><span class="t" style="left:743.00px;top:286px;font-size:12px;color:#000;font-weight:bold;-webkit-text-stroke:0.3px;">PRE-IMPORT EVENTS</span><span class="t" style="left:1180.00px;top:286px;font-size:12px;color:#000;font-weight:bold;-webkit-text-stroke:0.3px;letter-spacing:0.333px;">Len:</span><div style="left:1212px;top:286px;width:80px;height:20px;background:#fff;border:1px solid #8c8c8c;border-radius:3px;"></div><span class="t" style="left:1216.00px;top:287px;font-size:12px;color:#000;letter-spacing:0.167px;">0:00:14</span><div style="left:743px;top:306px;width:549px;height:149px;background:#fff;border:2px solid #9a9a9a;border-radius:3px;"></div><div style="left:745px;top:309px;width:70px;height:21px;background:linear-gradient(#ececf0,#d8d8dd);border-right:2px solid #8a8a8a;border-bottom:1px solid #8a8a8a;box-shadow:inset 1px 1px 0 #f8f8fa;"></div><span class="t" style="left:768.50px;top:309px;font-size:12px;color:#000;">Cart</span><div style="left:815px;top:309px;width:60px;height:21px;background:linear-gradient(#ececf0,#d8d8dd);border-right:2px solid #8a8a8a;border-bottom:1px solid #8a8a8a;box-shadow:inset 1px 1px 0 #f8f8fa;"></div><span class="t" style="left:828.50px;top:309px;font-size:12px;color:#000;letter-spacing:-0.250px;">Group</span><div style="left:875px;top:309px;width:52px;height:21px;background:linear-gradient(#ececf0,#d8d8dd);border-right:2px solid #8a8a8a;border-bottom:1px solid #8a8a8a;box-shadow:inset 1px 1px 0 #f8f8fa;"></div><span class="t" style="left:882.50px;top:309px;font-size:12px;color:#000;">Length</span><div style="left:927px;top:309px;width:93px;height:21px;background:linear-gradient(#ececf0,#d8d8dd);border-right:2px solid #8a8a8a;border-bottom:1px solid #8a8a8a;box-shadow:inset 1px 1px 0 #f8f8fa;"></div><span class="t" style="left:961.50px;top:309px;font-size:12px;color:#000;letter-spacing:0.250px;">Title</span><div style="left:1020px;top:309px;width:254px;height:21px;background:linear-gradient(#ececf0,#d8d8dd);border-right:1px solid #8a8a8a;border-bottom:1px solid #8a8a8a;box-shadow:inset 1px 1px 0 #f8f8fa;"></div><span class="t" style="left:1120.50px;top:309px;font-size:12px;color:#000;letter-spacing:0.111px;">Transition</span><svg style="position:absolute;left:748px;top:337px" width="16" height="16"><use href="#mic"/></svg><span class="t" style="left:818.00px;top:335px;font-size:12px;color:#000;letter-spacing:-0.500px;">Track</span><span class="t" style="left:931.00px;top:335px;font-size:12px;color:#000;">[Voice Track]</span><span class="t" style="left:1023.00px;top:335px;font-size:12px;color:#000;letter-spacing:0.400px;">[auto]</span><svg style="position:absolute;left:748px;top:367px" width="16" height="16"><use href="#gear"/></svg><span class="t" style="left:770.00px;top:365px;font-size:12px;color:#000;letter-spacing:0.200px;">050003</span><span class="t" style="left:818.00px;top:365px;font-size:12px;color:#000;font-weight:bold;-webkit-text-stroke:0.3px;letter-spacing:-0.200px;">MACROS</span><span class="t" style="left:878.00px;top:365px;font-size:12px;color:#000;">:00</span><span class="t" style="left:931.00px;top:365px;font-size:12px;color:#000;letter-spacing:-0.286px;">GPIO Relay Test</span><span class="t" style="left:1023.00px;top:365px;font-size:12px;color:#000;letter-spacing:-0.800px;">SEGUE</span><svg style="position:absolute;left:748px;top:397px" width="16" height="16"><use href="#note"/></svg><span class="t" style="left:818.00px;top:395px;font-size:12px;color:#000;">Marker</span><span class="t" style="left:931.00px;top:395px;font-size:12px;color:#000;letter-spacing:0.222px;">[Log Note]</span><span class="t" style="left:1023.00px;top:395px;font-size:12px;color:#000;letter-spacing:-0.800px;">SEGUE</span><svg style="position:absolute;left:748px;top:427px" width="16" height="16"><use href="#spk"/></svg><span class="t" style="left:770.00px;top:425px;font-size:12px;color:#000;letter-spacing:0.200px;">060105</span><span class="t" style="left:818.00px;top:425px;font-size:12px;color:#7cf020;font-weight:bold;-webkit-text-stroke:0.3px;">IDENTS</span><span class="t" style="left:878.00px;top:425px;font-size:12px;color:#000;">:14</span><span class="t" style="left:931.00px;top:425px;font-size:12px;color:#000;letter-spacing:-0.714px;">LEGAL ID</span><span class="t" style="left:1023.00px;top:425px;font-size:12px;color:#000;letter-spacing:-0.800px;">SEGUE</span><div style="left:1274px;top:309px;width:16px;height:144px;background:repeating-conic-gradient(#fff 0 25%,#e9e9e9 0 50%) 0 0/2px 2px;border-left:1px dotted #b8b8b8;border-right:1px dotted #b8b8b8;"></div><div style="left:1274px;top:308px;width:16px;height:16px;background:linear-gradient(#e8e8ec,#d0d0d5);border:1px solid #8c8c8c;border-radius:3px;"></div><svg style="position:absolute;left:1277.50px;top:312.75px" width="8.00" height="4.50"><path d="M0.00 4.50 L8.00 4.50 L4.00 0.00 Z" fill="#000"/></svg><div style="left:1274px;top:324px;width:16px;height:77px;background:linear-gradient(#e8e8ec,#d0d0d5);border:1px solid #8c8c8c;border-radius:3px;"></div><div style="left:1278px;top:354px;width:2px;height:2px;background:linear-gradient(135deg,#a8a8a8 50%,#f8f8f8 50%);"></div><div style="left:1278px;top:358px;width:2px;height:2px;background:linear-gradient(135deg,#a8a8a8 50%,#f8f8f8 50%);"></div><div style="left:1278px;top:362px;width:2px;height:2px;background:linear-gradient(135deg,#a8a8a8 50%,#f8f8f8 50%);"></div><div style="left:1278px;top:366px;width:2px;height:2px;background:linear-gradient(135deg,#a8a8a8 50%,#f8f8f8 50%);"></div><div style="left:1278px;top:370px;width:2px;height:2px;background:linear-gradient(135deg,#a8a8a8 50%,#f8f8f8 50%);"></div><div style="left:1282px;top:354px;width:2px;height:2px;background:linear-gradient(135deg,#a8a8a8 50%,#f8f8f8 50%);"></div><div style="left:1282px;top:358px;width:2px;height:2px;background:linear-gradient(135deg,#a8a8a8 50%,#f8f8f8 50%);"></div><div style="left:1282px;top:362px;width:2px;height:2px;background:linear-gradient(135deg,#a8a8a8 50%,#f8f8f8 50%);"></div><div style="left:1282px;top:366px;width:2px;height:2px;background:linear-gradient(135deg,#a8a8a8 50%,#f8f8f8 50%);"></div><div style="left:1282px;top:370px;width:2px;height:2px;background:linear-gradient(135deg,#a8a8a8 50%,#f8f8f8 50%);"></div><div style="left:1286px;top:354px;width:2px;height:2px;background:linear-gradient(135deg,#a8a8a8 50%,#f8f8f8 50%);"></div><div style="left:1286px;top:358px;width:2px;height:2px;background:linear-gradient(135deg,#a8a8a8 50%,#f8f8f8 50%);"></div><div style="left:1286px;top:362px;width:2px;height:2px;background:linear-gradient(135deg,#a8a8a8 50%,#f8f8f8 50%);"></div><div style="left:1286px;top:366px;width:2px;height:2px;background:linear-gradient(135deg,#a8a8a8 50%,#f8f8f8 50%);"></div><div style="left:1286px;top:370px;width:2px;height:2px;background:linear-gradient(135deg,#a8a8a8 50%,#f8f8f8 50%);"></div><div style="left:1274px;top:421px;width:16px;height:16px;background:linear-gradient(#e8e8ec,#d0d0d5);border:1px solid #8c8c8c;border-radius:3px;"></div><svg style="position:absolute;left:1277.50px;top:425.75px" width="8.00" height="4.50"><path d="M0.00 4.50 L8.00 4.50 L4.00 0.00 Z" fill="#000"/></svg><div style="left:1274px;top:437px;width:16px;height:16px;background:linear-gradient(#e8e8ec,#d0d0d5);border:1px solid #8c8c8c;border-radius:3px;"></div><svg style="position:absolute;left:1277.50px;top:442.75px" width="8.00" height="4.50"><path d="M0.00 0.00 L8.00 0.00 L4.00 4.50 Z" fill="#000"/></svg><div style="left:1302px;top:310px;width:40px;height:40px;background:linear-gradient(#e8e8ec,#d0d0d5);border:1px solid #8c8c8c;border-radius:3px;box-shadow:inset 0 1px 0 #f4f4f8;"></div><svg style="position:absolute;left:1310px;top:321px" width="24" height="18"><path d="M0.5 17.5 L11.8 0.5 L23.2 17.5 Z" fill="#000"/></svg><div style="left:1302px;top:371px;width:40px;height:40px;background:linear-gradient(#e8e8ec,#d0d0d5);border:1px solid #8c8c8c;border-radius:3px;box-shadow:inset 0 1px 0 #f4f4f8;"></div><svg style="position:absolute;left:1310px;top:383px" width="24" height="18"><path d="M0.5 0.5 L11.8 17.5 L23.2 0.5 Z" fill="#000"/></svg><span class="t" style="left:744.00px;top:466px;font-size:12px;color:#000;font-weight:bold;-webkit-text-stroke:0.3px;letter-spacing:-0.200px;">IMPORT</span><div style="left:808px;top:469px;width:13px;height:13px;background:#f8f8f8;border:1px solid #8c8c8c;border-radius:50%;"></div><div style="left:811px;top:472px;width:7px;height:7px;background:#000;border-radius:50%;"></div><span class="t" style="left:828.00px;top:466px;font-size:12px;color:#000;font-weight:bold;-webkit-text-stroke:0.3px;letter-spacing:0.333px;">None</span><div style="left:888px;top:469px;width:13px;height:13px;background:#f8f8f8;border:1px solid #8c8c8c;border-radius:50%;"></div><span class="t" style="left:908.00px;top:466px;font-size:12px;color:#000;font-weight:bold;-webkit-text-stroke:0.3px;letter-spacing:0.182px;">From Traffic</span><div style="left:1008px;top:469px;width:13px;height:13px;background:#f8f8f8;border:1px solid #8c8c8c;border-radius:50%;"></div><span class="t" style="left:1028.00px;top:466px;font-size:12px;color:#000;font-weight:bold;-webkit-text-stroke:0.3px;letter-spacing:0.222px;">From Music</span><div style="left:1128px;top:469px;width:13px;height:13px;background:#f8f8f8;border:1px solid #8c8c8c;border-radius:50%;"></div><span class="t" style="left:1148.00px;top:466px;font-size:12px;color:#000;font-weight:bold;-webkit-text-stroke:0.3px;letter-spacing:0.545px;">Select from:</span><div style="left:1238px;top:465px;width:100px;height:20px;background:linear-gradient(#e8e8ec,#d0d0d5);border:1px solid #8c8c8c;border-radius:3px;box-shadow:inset 0 1px 0 #f4f4f8;"></div><div style="left:1321px;top:465px;width:1px;height:20px;background:#8c8c8c;"></div><svg style="position:absolute;left:1326.00px;top:473.00px" width="7.00" height="4.00"><path d="M0.00 0.00 L7.00 0.00 L3.50 4.00 Z" fill="#888"/></svg><span class="t" style="left:1244.00px;top:466px;font-size:12px;color:#8a8a8a;letter-spacing:-0.800px;">BEDS</span><span class="t" style="left:758.00px;top:489px;font-size:12px;color:#8a8a8a;letter-spacing:0.238px;">Import carts scheduled</span><div style="left:894px;top:490px;width:60px;height:21px;background:#efefef;border:1px solid #8c8c8c;border-radius:3px;"></div><div style="left:937px;top:490px;width:17px;height:21px;background:linear-gradient(#e8e8ec,#d0d0d5);border:1px solid #8c8c8c;border-radius:0 3px 3px 0;"></div><div style="left:937px;top:500px;width:17px;height:1px;background:#8c8c8c;"></div><svg style="position:absolute;left:941.50px;top:493.50px" width="8.00" height="4.00"><path d="M0.00 4.00 L8.00 4.00 L4.00 0.00 Z" fill="#777"/></svg><svg style="position:absolute;left:941.50px;top:504.00px" width="8.00" height="4.00"><path d="M0.00 0.00 L8.00 0.00 L4.00 4.00 Z" fill="#777"/></svg><span class="t" style="left:899.00px;top:491px;font-size:12px;color:#c8c8c8;letter-spacing:0.250px;">00:00</span><span class="t" style="left:958.00px;top:489px;font-size:12px;color:#8a8a8a;letter-spacing:0.344px;">prior to the start of this event.</span><span class="t" style="left:758.00px;top:510px;font-size:12px;color:#8a8a8a;letter-spacing:0.238px;">Import carts scheduled</span><div style="left:894px;top:511px;width:60px;height:21px;background:#efefef;border:1px solid #8c8c8c;border-radius:3px;"></div><div style="left:937px;top:511px;width:17px;height:21px;background:linear-gradient(#e8e8ec,#d0d0d5);border:1px solid #8c8c8c;border-radius:0 3px 3px 0;"></div><div style="left:937px;top:521px;width:17px;height:1px;background:#8c8c8c;"></div><svg style="position:absolute;left:941.50px;top:514.50px" width="8.00" height="4.00"><path d="M0.00 4.00 L8.00 4.00 L4.00 0.00 Z" fill="#777"/></svg><svg style="position:absolute;left:941.50px;top:525.00px" width="8.00" height="4.00"><path d="M0.00 0.00 L8.00 0.00 L4.00 4.00 Z" fill="#777"/></svg><span class="t" style="left:899.00px;top:512px;font-size:12px;color:#c8c8c8;letter-spacing:0.250px;">00:00</span><span class="t" style="left:958.00px;top:510px;font-size:12px;color:#8a8a8a;letter-spacing:0.296px;">after the end of this event.</span><span class="t" style="left:763.00px;top:534px;font-size:12px;color:#8a8a8a;letter-spacing:0.308px;">Import inline traffic event</span><div style="left:758px;top:554px;width:365px;height:20px;background:linear-gradient(#e8e8ec,#d0d0d5);border:1px solid #8c8c8c;border-radius:3px;box-shadow:inset 0 1px 0 #f4f4f8;"></div><div style="left:1106px;top:554px;width:1px;height:20px;background:#8c8c8c;"></div><svg style="position:absolute;left:1111.00px;top:562.00px" width="7.00" height="4.00"><path d="M0.00 0.00 L7.00 0.00 L3.50 4.00 Z" fill="#888"/></svg><span class="t" style="left:763.00px;top:555px;font-size:12px;color:#8a8a8a;letter-spacing:0.400px;">[none]</span><div style="left:1134px;top:486px;width:1px;height:85px;background:#000;"></div><span class="t" style="left:1145.00px;top:488px;font-size:12px;color:#8a8a8a;letter-spacing:0.188px;">Artist Separation</span><div style="left:1243px;top:490px;width:53px;height:19px;background:#efefef;border:1px solid #8c8c8c;border-radius:3px;"></div><div style="left:1279px;top:490px;width:17px;height:19px;background:linear-gradient(#e8e8ec,#d0d0d5);border:1px solid #8c8c8c;border-radius:0 3px 3px 0;"></div><div style="left:1279px;top:499px;width:17px;height:1px;background:#8c8c8c;"></div><svg style="position:absolute;left:1283.50px;top:493.00px" width="8.00" height="4.00"><path d="M0.00 4.00 L8.00 4.00 L4.00 0.00 Z" fill="#777"/></svg><svg style="position:absolute;left:1283.50px;top:502.50px" width="8.00" height="4.00"><path d="M0.00 0.00 L8.00 0.00 L4.00 4.00 Z" fill="#777"/></svg><span class="t" style="left:1248.00px;top:490px;font-size:12px;color:#c8c8c8;">541</span><div style="left:1303px;top:490px;width:40px;height:19px;background:linear-gradient(#e8e8ec,#d0d0d5);border:1px solid #8c8c8c;border-radius:3px;box-shadow:inset 0 1px 0 #f4f4f8;"></div><span class="t" style="left:1309.00px;top:490px;font-size:12px;color:#8a8a8a;letter-spacing:-0.333px;">None</span><span class="t" style="left:1150.00px;top:510px;font-size:12px;color:#8a8a8a;letter-spacing:0.200px;">Title Separation</span><div style="left:1243px;top:511px;width:53px;height:19px;background:#efefef;border:1px solid #8c8c8c;border-radius:3px;"></div><div style="left:1279px;top:511px;width:17px;height:19px;background:linear-gradient(#e8e8ec,#d0d0d5);border:1px solid #8c8c8c;border-radius:0 3px 3px 0;"></div><div style="left:1279px;top:520px;width:17px;height:1px;background:#8c8c8c;"></div><svg style="position:absolute;left:1283.50px;top:514.00px" width="8.00" height="4.00"><path d="M0.00 4.00 L8.00 4.00 L4.00 0.00 Z" fill="#777"/></svg><svg style="position:absolute;left:1283.50px;top:523.50px" width="8.00" height="4.00"><path d="M0.00 0.00 L8.00 0.00 L4.00 4.00 Z" fill="#777"/></svg><span class="t" style="left:1248.00px;top:511px;font-size:12px;color:#c8c8c8;">100</span><div style="left:1303px;top:511px;width:40px;height:19px;background:linear-gradient(#e8e8ec,#d0d0d5);border:1px solid #8c8c8c;border-radius:3px;box-shadow:inset 0 1px 0 #f4f4f8;"></div><span class="t" style="left:1309.00px;top:511px;font-size:12px;color:#8a8a8a;letter-spacing:-0.333px;">None</span><span class="t" style="left:1151.00px;top:533px;font-size:12px;color:#8a8a8a;letter-spacing:0.077px;">Must have code</span><div style="left:1243px;top:534px;width:100px;height:19px;background:linear-gradient(#e8e8ec,#d0d0d5);border:1px solid #8c8c8c;border-radius:3px;box-shadow:inset 0 1px 0 #f4f4f8;"></div><div style="left:1326px;top:534px;width:1px;height:19px;background:#8c8c8c;"></div><svg style="position:absolute;left:1331.00px;top:541.50px" width="7.00" height="4.00"><path d="M0.00 0.00 L7.00 0.00 L3.50 4.00 Z" fill="#888"/></svg><span class="t" style="left:1248.00px;top:534px;font-size:12px;color:#8a8a8a;letter-spacing:0.200px;">[None]</span><span class="t" style="left:1187.00px;top:553px;font-size:12px;color:#8a8a8a;">and code</span><div style="left:1243px;top:555px;width:100px;height:19px;background:linear-gradient(#e8e8ec,#d0d0d5);border:1px solid #8c8c8c;border-radius:3px;box-shadow:inset 0 1px 0 #f4f4f8;"></div><div style="left:1326px;top:555px;width:1px;height:19px;background:#8c8c8c;"></div><svg style="position:absolute;left:1331.00px;top:562.50px" width="7.00" height="4.00"><path d="M0.00 0.00 L7.00 0.00 L3.50 4.00 Z" fill="#888"/></svg><span class="t" style="left:1248.00px;top:555px;font-size:12px;color:#8a8a8a;letter-spacing:0.200px;">[None]</span><span class="t" style="left:743.00px;top:591px;font-size:12px;color:#000;font-weight:bold;-webkit-text-stroke:0.3px;letter-spacing:0.059px;">POST-IMPORT EVENTS</span><span class="t" style="left:1180.00px;top:591px;font-size:12px;color:#000;font-weight:bold;-webkit-text-stroke:0.3px;letter-spacing:0.333px;">Len:</span><div style="left:1212px;top:591px;width:80px;height:20px;background:#fff;border:1px solid #8c8c8c;border-radius:3px;"></div><span class="t" style="left:1216.00px;top:592px;font-size:12px;color:#000;letter-spacing:0.167px;">0:00:00</span><div style="left:743px;top:611px;width:549px;height:149px;background:#fff;border:2px solid #9a9a9a;border-radius:3px;"></div><div style="left:745px;top:614px;width:35px;height:21px;background:linear-gradient(#ececf0,#d8d8dd);border-right:2px solid #8a8a8a;border-bottom:1px solid #8a8a8a;box-shadow:inset 1px 1px 0 #f8f8fa;"></div><span class="t" style="left:751.00px;top:614px;font-size:12px;color:#000;">Cart</span><div style="left:780px;top:614px;width:46px;height:21px;background:linear-gradient(#ececf0,#d8d8dd);border-right:2px solid #8a8a8a;border-bottom:1px solid #8a8a8a;box-shadow:inset 1px 1px 0 #f8f8fa;"></div><span class="t" style="left:786.50px;top:614px;font-size:12px;color:#000;letter-spacing:-0.250px;">Group</span><div style="left:826px;top:614px;width:52px;height:21px;background:linear-gradient(#ececf0,#d8d8dd);border-right:2px solid #8a8a8a;border-bottom:1px solid #8a8a8a;box-shadow:inset 1px 1px 0 #f8f8fa;"></div><span class="t" style="left:833.50px;top:614px;font-size:12px;color:#000;">Length</span><div style="left:878px;top:614px;width:87px;height:21px;background:linear-gradient(#ececf0,#d8d8dd);border-right:2px solid #8a8a8a;border-bottom:1px solid #8a8a8a;box-shadow:inset 1px 1px 0 #f8f8fa;"></div><span class="t" style="left:909.50px;top:614px;font-size:12px;color:#000;letter-spacing:0.250px;">Title</span><div style="left:965px;top:614px;width:325px;height:21px;background:linear-gradient(#ececf0,#d8d8dd);border-right:1px solid #8a8a8a;border-bottom:1px solid #8a8a8a;box-shadow:inset 1px 1px 0 #f8f8fa;"></div><span class="t" style="left:1101.00px;top:614px;font-size:12px;color:#000;letter-spacing:0.111px;">Transition</span><span class="t" style="left:881.00px;top:639px;font-size:12px;color:#000;">-- End of List --</span><span class="t" style="left:968.00px;top:639px;font-size:12px;color:#000;letter-spacing:0.400px;">[auto]</span><div style="left:1302px;top:615px;width:40px;height:40px;background:linear-gradient(#e8e8ec,#d0d0d5);border:1px solid #8c8c8c;border-radius:3px;box-shadow:inset 0 1px 0 #f4f4f8;"></div><svg style="position:absolute;left:1310px;top:626px" width="24" height="18"><path d="M0.5 17.5 L11.8 0.5 L23.2 17.5 Z" fill="#000"/></svg><div style="left:1302px;top:676px;width:40px;height:40px;background:linear-gradient(#e8e8ec,#d0d0d5);border:1px solid #8c8c8c;border-radius:3px;box-shadow:inset 0 1px 0 #f4f4f8;"></div><svg style="position:absolute;left:1310px;top:688px" width="24" height="18"><path d="M0.5 0.5 L11.8 17.5 L23.2 0.5 Z" fill="#000"/></svg><div style="left:742px;top:776px;width:80px;height:50px;background:linear-gradient(#e8e8ec,#d0d0d5);border:1px solid #8c8c8c;border-radius:3px;box-shadow:inset 0 1px 0 #f4f4f8;"></div><span class="t" style="left:766.00px;top:792px;font-size:13px;color:#000;font-weight:bold;-webkit-text-stroke:0.3px;letter-spacing:0.667px;">Save</span><div style="left:832px;top:776px;width:80px;height:50px;background:linear-gradient(#e8e8ec,#d0d0d5);border:1px solid #8c8c8c;border-radius:3px;box-shadow:inset 0 1px 0 #f4f4f8;"></div><span class="t" style="left:846.00px;top:792px;font-size:13px;color:#000;font-weight:bold;-webkit-text-stroke:0.3px;letter-spacing:0.333px;">Save As</span><div style="left:1172px;top:776px;width:80px;height:50px;background:linear-gradient(#e8e8ec,#d0d0d5);border:1px solid #505050;border-radius:3px;box-shadow:inset 0 1px 0 #f4f4f8;"></div><span class="t" style="left:1202.15px;top:792px;font-size:13px;color:#000;font-weight:bold;-webkit-text-stroke:0.3px;letter-spacing:-0.300px;">OK</span><div style="left:1262px;top:776px;width:80px;height:50px;background:linear-gradient(#e8e8ec,#d0d0d5);border:1px solid #8c8c8c;border-radius:3px;box-shadow:inset 0 1px 0 #f4f4f8;"></div><span class="t" style="left:1280.00px;top:792px;font-size:13px;color:#000;font-weight:bold;-webkit-text-stroke:0.3px;letter-spacing:0.200px;">Cancel</span><div style="left:957px;top:776px;width:80px;height:50px;background:linear-gradient(#e8e8ec,#d0d0d5);border:1px solid #8c8c8c;border-radius:3px;box-shadow:inset 0 1px 0 #f4f4f8;"></div><span class="t" style="left:969.00px;top:785px;font-size:13px;color:#000;font-weight:bold;-webkit-text-stroke:0.3px;letter-spacing:0.286px;">Services</span><span class="t" style="left:985.00px;top:799px;font-size:13px;color:#000;font-weight:bold;-webkit-text-stroke:0.3px;">List</span><div style="left:1047px;top:776px;width:80px;height:50px;background:linear-gradient(#ff10ff,#e000e0);border:1px solid #8c8c8c;border-radius:3px;box-shadow:inset 0 1px 0 #f4f4f8;"></div><span class="t" style="left:1070.00px;top:792px;font-size:13px;color:#000;font-weight:bold;-webkit-text-stroke:0.3px;">Color</span>
</body></html>
